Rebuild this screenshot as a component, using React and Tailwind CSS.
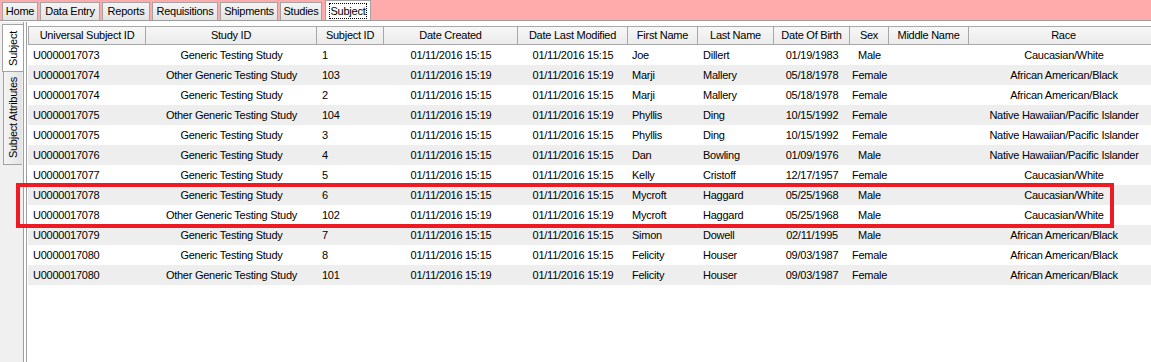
import React from "react";

// ─── Data ─────────────────────────────────────────────────────────────────────

const TOP_TABS = [
  { label: "Home",         w: 36 },
  { label: "Data Entry",   w: 60 },
  { label: "Reports",      w: 48 },
  { label: "Requisitions", w: 66 },
  { label: "Shipments",    w: 58 },
  { label: "Studies",      w: 42 },
];

const COLUMNS = [
  { key: "usid",    label: "Universal Subject ID", w: "w-[118px]", align: "text-left px-[5px]" },
  { key: "study",   label: "Study ID",             w: "w-[171px]", align: "text-center px-[5px]" },
  { key: "sid",     label: "Subject ID",           w: "w-[67px]",  align: "text-left px-[5px]" },
  { key: "created", label: "Date Created",         w: "w-[134px]", align: "text-center px-[5px]" },
  { key: "mod",     label: "Date Last Modified",   w: "w-[110px]", align: "text-center px-[5px]" },
  { key: "first",   label: "First Name",           w: "w-[70px]",  align: "text-left px-[4px]" },
  { key: "last",    label: "Last Name",            w: "w-[76px]",  align: "text-left px-[5px]" },
  { key: "dob",     label: "Date Of Birth",        w: "w-[76px]",  align: "text-center px-[2px]" },
  { key: "sex",     label: "Sex",                  w: "w-[39px]",  align: "text-center px-0" },
  { key: "middle",  label: "Middle Name",          w: "w-[80px]",  align: "text-left px-[5px]" },
  { key: "race",    label: "Race",                 w: "w-[190px]", align: "text-center px-[2px]" },
];

const G  = "Generic Testing Study";
const OG = "Other Generic Testing Study";
const T5 = "01/11/2016 15:15";
const T9 = "01/11/2016 15:19";
const CW = "Caucasian/White";
const AA = "African American/Black";
const NH = "Native Hawaiian/Pacific Islander";

const ROWS = [
  ["U0000017073", G,  "1",   T5, T5, "Joe",      "Dillert",  "01/19/1983", "Male",   "", CW],
  ["U0000017074", OG, "103", T9, T9, "Marji",    "Mallery",  "05/18/1978", "Female", "", AA],
  ["U0000017074", G,  "2",   T5, T5, "Marji",    "Mallery",  "05/18/1978", "Female", "", AA],
  ["U0000017075", OG, "104", T9, T9, "Phyllis",  "Ding",     "10/15/1992", "Female", "", NH],
  ["U0000017075", G,  "3",   T5, T5, "Phyllis",  "Ding",     "10/15/1992", "Female", "", NH],
  ["U0000017076", G,  "4",   T5, T5, "Dan",      "Bowling",  "01/09/1976", "Male",   "", NH],
  ["U0000017077", G,  "5",   T5, T5, "Kelly",    "Cristoff", "12/17/1957", "Female", "", CW],
  ["U0000017078", G,  "6",   T5, T5, "Mycroft",  "Haggard",  "05/25/1968", "Male",   "", CW],
  ["U0000017078", OG, "102", T9, T9, "Mycroft",  "Haggard",  "05/25/1968", "Male",   "", CW],
  ["U0000017079", G,  "7",   T5, T5, "Simon",    "Dowell",   "02/11/1995", "Male",   "", AA],
  ["U0000017080", G,  "8",   T5, T5, "Felicity", "Houser",   "09/03/1987", "Female", "", AA],
  ["U0000017080", OG, "101", T9, T9, "Felicity", "Houser",   "09/03/1987", "Female", "", AA],
];

// ─── App ──────────────────────────────────────────────────────────────────────

export default function App() {
  return (
    <div className="relative flex h-[362px] w-[1151px] flex-col overflow-hidden bg-white font-['Liberation_Sans',Arial,sans-serif] text-[11px] tracking-[-0.25px] text-black">

      {/* ── Top tab strip ── */}
      <div className="flex h-[20px] shrink-0 items-end gap-[2px] bg-[#ffabab] pl-[2px]">
        {TOP_TABS.map((t) => (
          <div
            key={t.label}
            style={{ width: t.w }}
            className="flex h-[18px] items-center justify-center border border-b-0 border-[#a3a3a3] bg-gradient-to-b from-[#f4f4f4] to-[#e4e4e4] leading-none"
          >
            {t.label}
          </div>
        ))}
        <div className="ml-[1px] flex h-[20px] w-[46px] items-center justify-center border border-b-0 border-[#a3a3a3] bg-white">
          <span className="border border-dotted border-black px-[1px] leading-[14px]">Subject</span>
        </div>
      </div>
      <div className="h-[1px] shrink-0 bg-[#9c9c9c]" />
      <div className="h-[1px] shrink-0 bg-white" />

      {/* ── Body ── */}
      <div className="flex min-h-0 flex-1">

        {/* Vertical tabs */}
        <div className="flex w-[23px] shrink-0 flex-col items-end bg-[#f0f0f0] pt-[2px]">
          <div className="flex h-[48px] w-[21px] items-center justify-center border border-r-0 border-[#a3a3a3] bg-white">
            <span className="rotate-180 leading-none [writing-mode:vertical-rl]">Subject</span>
          </div>
          <div className="mr-[1px] flex h-[93px] w-[19px] items-center justify-center border border-t-0 border-r-0 border-[#a3a3a3] bg-gradient-to-r from-[#f4f4f4] to-[#e4e4e4]">
            <span className="rotate-180 leading-none [writing-mode:vertical-rl]">Subject Attributes</span>
          </div>
        </div>

        {/* Double divider */}
        <div className="w-[4px] shrink-0 border-x border-[#a0a0a0] bg-white" />

        {/* Grid */}
        <div className="min-w-0 flex-1 overflow-hidden bg-white pt-[4px] pl-[1px]">
          <div className="flex h-[19px] w-max">
            {COLUMNS.map((c) => (
              <div
                key={c.key}
                className={`${c.w} flex shrink-0 items-center justify-center border border-l-0 border-[#a8a8a8] bg-gradient-to-b from-[#f7f7f7] to-[#ebebeb] first:border-l leading-none`}
              >
                {c.label}
              </div>
            ))}
          </div>

          {ROWS.map((row, i) => (
            <div
              key={i}
              className={`flex h-[20px] w-max items-center ${i % 2 ? "bg-[#eeeeee]" : "bg-white"}`}
            >
              {COLUMNS.map((c, j) => (
                <div key={c.key} className={`${c.w} ${c.align} shrink-0 whitespace-nowrap leading-none`}>
                  {row[j]}
                </div>
              ))}
            </div>
          ))}
        </div>
      </div>

      {/* ── Annotation box ── */}
      <div className="pointer-events-none absolute left-[16px] top-[183px] h-[45px] w-[1098px] border-[4px] border-[#ed1c24]" />
    </div>
  );
}
